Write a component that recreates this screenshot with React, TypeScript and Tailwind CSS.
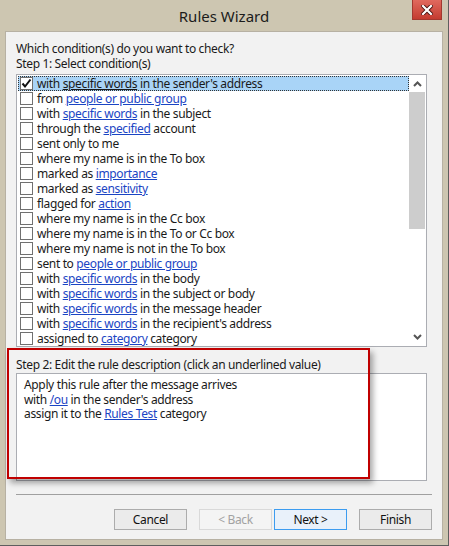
import React from "react";

type Cond = { pre: string; link?: string; post?: string };

const conditions: Cond[] = [
  { pre: "with ", link: "specific words", post: " in the sender's address" },
  { pre: "from ", link: "people or public group" },
  { pre: "with ", link: "specific words", post: " in the subject" },
  { pre: "through the ", link: "specified", post: " account" },
  { pre: "sent only to me" },
  { pre: "where my name is in the To box" },
  { pre: "marked as ", link: "importance" },
  { pre: "marked as ", link: "sensitivity" },
  { pre: "flagged for ", link: "action" },
  { pre: "where my name is in the Cc box" },
  { pre: "where my name is in the To or Cc box" },
  { pre: "where my name is not in the To box" },
  { pre: "sent to ", link: "people or public group" },
  { pre: "with ", link: "specific words", post: " in the body" },
  { pre: "with ", link: "specific words", post: " in the subject or body" },
  { pre: "with ", link: "specific words", post: " in the message header" },
  { pre: "with ", link: "specific words", post: " in the recipient's address" },
  { pre: "assigned to ", link: "category", post: " category" },
];

function Checkbox({ checked }: { checked?: boolean }) {
  return (
    <span className="ml-[1px] flex h-[13px] w-[13px] shrink-0 items-center justify-center border border-[#707070] bg-white">
      {checked && (
        <svg width="11" height="11" viewBox="0 0 11 11">
          <path d="M1.5 5.5 L4 8.5 L9.5 1.5" fill="none" stroke="#111" strokeWidth="2" />
        </svg>
      )}
    </span>
  );
}

function Row({ c, selected }: { c: Cond; selected?: boolean }) {
  return (
    <div
      className={
        selected
          ? "flex h-[15px] items-center gap-[4px] border border-dotted border-[#333] bg-[#a9d4f7]"
          : "flex h-[15px] items-center gap-[4px] border border-transparent"
      }
    >
      <Checkbox checked={selected} />
      <span className="whitespace-nowrap leading-[13px]">
        {c.pre}
        {c.link && (
          <span className={selected ? "underline" : "text-[#1a45c4] underline"}>{c.link}</span>
        )}
        {c.post}
      </span>
    </div>
  );
}

function Button({ label, variant }: { label: string; variant?: "default" | "disabled" }) {
  const cls =
    variant === "default"
      ? "border-[#3c9cf0] bg-[#e9f1fa] text-[#111]"
      : variant === "disabled"
      ? "border-[#d9d9d9] bg-[#f4f4f4] text-[#a2a2a2]"
      : "border-[#acacac] bg-[#ebebeb] text-[#111]";
  return (
    <div className={`flex h-[21px] w-[73px] items-center justify-center border ${cls}`}>{label}</div>
  );
}

export default function App() {
  return (
    <div
      className="relative h-[546px] w-[449px] overflow-hidden border-b border-r border-[#5e5e5e] bg-[#cdc6b1] text-[12px] tracking-[-0.35px] text-[#1a1a1a]"
      style={{ fontFamily: '"Noto Sans", "Open Sans", sans-serif' }}
    >
      {/* title bar */}
      <div className="grid h-[31px] grid-cols-[36px_1fr_36px]">
        <div />
        <div className="flex items-center justify-center pt-[1px] text-[15px] tracking-normal text-[#1b1b1b]">
          Rules Wizard
        </div>
        <div className="flex items-start">
          <div className="flex h-[20px] w-[30px] items-center justify-center border border-t-0 border-[#a3382f] bg-gradient-to-b from-[#e0695e] to-[#c43b30]">
            <svg width="12" height="10" viewBox="0 0 12 10">
              <path d="M2 1 L10 9 M10 1 L2 9" stroke="#4a1310" strokeWidth="4" strokeLinecap="square" />
              <path d="M2 1 L10 9 M10 1 L2 9" stroke="#fff" strokeWidth="2.2" strokeLinecap="square" />
            </svg>
          </div>
        </div>
      </div>

      {/* client area */}
      <div className="mx-[5px] h-[509px] border border-[#b7b1a3] bg-[#f2f2f2] px-[10px] pt-[9px]">
        <div className="leading-[15px]">Which condition(s) do you want to check?</div>
        <div className="leading-[15px]">Step 1: Select condition(s)</div>

        <div className="mt-[3px] flex h-[273px] w-[411px] border border-[#abadb3] bg-white">
          <div className="flex-1 pl-[1px] pt-[1px]">
            {conditions.map((c, i) => (
              <Row key={i} c={c} selected={i === 0} />
            ))}
          </div>
          <div className="mr-[1px] flex w-[16px] flex-col pt-[1px] pb-[1px]">
            <div className="flex h-[16px] items-center justify-center">
              <svg width="9" height="6" viewBox="0 0 9 6">
                <path d="M1 5 L4.5 1.5 L8 5" fill="none" stroke="#555" strokeWidth="2" />
              </svg>
            </div>
            <div className="h-[137px] bg-[#cdcdcd]" />
            <div className="flex-1" />
            <div className="flex h-[16px] items-center justify-center">
              <svg width="9" height="6" viewBox="0 0 9 6">
                <path d="M1 1 L4.5 4.5 L8 1" fill="none" stroke="#555" strokeWidth="2" />
              </svg>
            </div>
          </div>
        </div>

        <div className="mt-[10px] leading-[15px]">Step 2: Edit the rule description (click an underlined value)</div>
        <div className="mt-[1px] h-[108px] w-[411px] border border-[#abadb3] bg-white pl-[7px] pt-[4px]">
          <div className="h-[14.5px] leading-[13px]">Apply this rule after the message arrives</div>
          <div className="h-[14.5px] leading-[13px]">
            with <span className="text-[#1a45c4] underline">/ou</span> in the sender's address
          </div>
          <div className="h-[14.5px] leading-[13px]">
            assign it to the <span className="text-[#1a45c4] underline">Rules Test</span> category
          </div>
        </div>

        <div className="mt-[13px] h-px bg-[#a0a0a0]" />

        <div className="mt-[14px] flex justify-end">
          <Button label="Cancel" />
          <div className="w-[12px]" />
          <Button label="< Back" variant="disabled" />
          <div className="w-[2px]" />
          <Button label="Next >" variant="default" />
          <div className="w-[12px]" />
          <Button label="Finish" />
        </div>
      </div>

      {/* red annotation frame */}
      <div className="pointer-events-none absolute left-[7px] top-[348px] h-[131px] w-[363px] border-2 border-[#c00000] shadow-[3px_4px_6px_rgba(0,0,0,0.35)]" />
    </div>
  );
}
